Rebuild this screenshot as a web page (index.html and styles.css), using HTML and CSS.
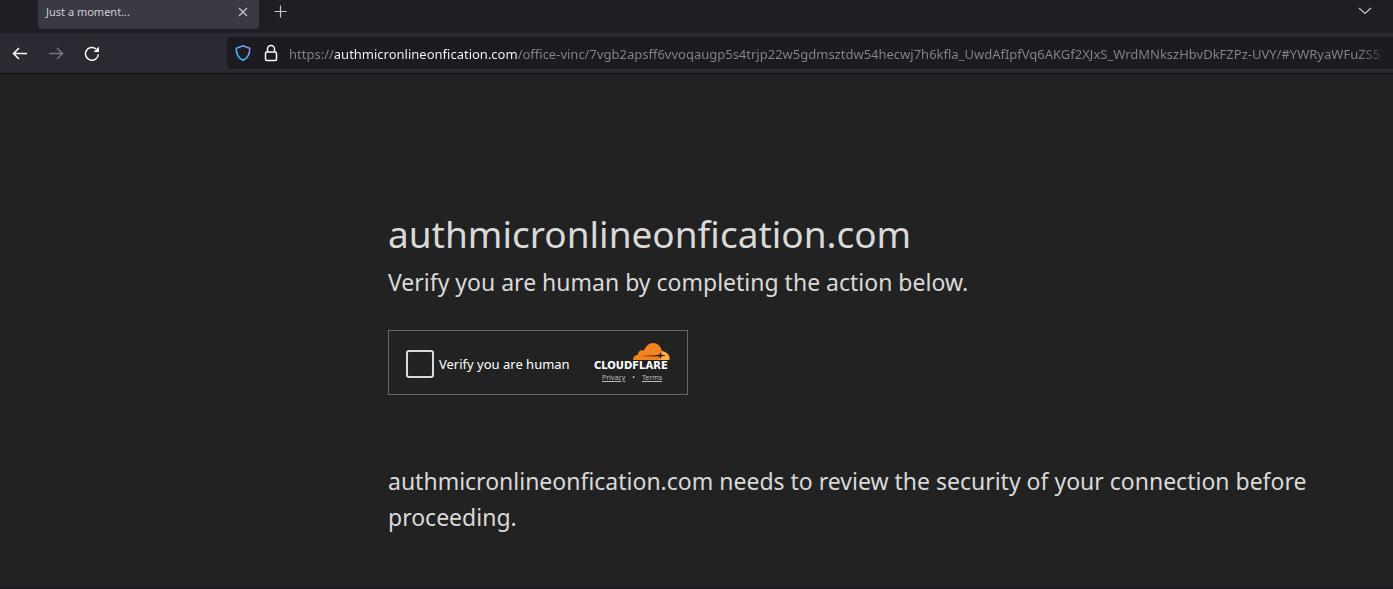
FILE: index.html
```html
<!DOCTYPE html>
<html lang="en">
<head>
    <meta charset="UTF-8">
    <meta name="viewport" content="width=device-width, initial-scale=1.0">
    <title>Just a moment...</title>
    <link rel="stylesheet" href="styles.css">
</head>
<body>

    <div class="tab-bar">
        <div class="tab">
            <span class="tab-title">Just a moment...</span>
            <button class="icon-button tab-close" aria-label="Close tab">
                <svg width="10" height="10" viewBox="0 0 10 10"><path d="M1 1l8 8M9 1l-8 8"/></svg>
            </button>
        </div>
        <button class="icon-button new-tab" aria-label="New tab">
            <svg width="13" height="13" viewBox="0 0 13 13"><path d="M6.500 0.500v12M0.500 6.500h12"/></svg>
        </button>
        <button class="icon-button all-tabs" aria-label="List all tabs">
            <svg width="14" height="8" viewBox="0 0 14 8"><path d="M1 1l6 5.5L13 1"/></svg>
        </button>
    </div>

    <div class="toolbar">
        <button class="icon-button nav-button" aria-label="Back">
            <svg width="16" height="16" viewBox="0 0 16 16"><path d="M15 8.500H1.500M7 3L1.500 8.500L7 14"/></svg>
        </button>
        <button class="icon-button nav-button" aria-label="Forward" disabled>
            <svg width="16" height="16" viewBox="0 0 16 16"><path d="M1 8.500h13.500M9 3L14.500 8.500L9 14"/></svg>
        </button>
        <button class="icon-button nav-button" aria-label="Reload">
            <svg width="16" height="16" viewBox="0 0 16 16">
                <path d="M14.300 9.200A6.400 6.400 0 1 1 12 3.900"/>
                <path class="filled" d="M15 1.500v5.500H9.500z"/>
            </svg>
        </button>
        <div class="url-bar">
            <svg class="shield" width="16" height="18" viewBox="0 0 16 18">
                <defs>
                    <linearGradient id="shield-color" x1="0" y1="1" x2="1" y2="0">
                        <stop offset="0.250" stop-color="#33c3ec"/>
                        <stop offset="0.900" stop-color="#a08cf0"/>
                    </linearGradient>
                </defs>
                <path stroke="url(#shield-color)" d="M8 1.700L14.700 4.300C14.900 9.500 13 14 8 16.300C3 14 1.100 9.500 1.300 4.300Z"/>
            </svg>
            <svg class="lock" width="14" height="18" viewBox="0 0 14 18">
                <rect x="1.500" y="8" width="11" height="8.500" rx="1.500"/>
                <path d="M3.500 8V5a3.500 3.500 0 0 1 7 0v3"/>
            </svg>
            <input class="url" type="text" aria-label="Address" value="https://authmicronlineonfication.com/office-vinc/7vgb2apsff6vvoqaugp5s4trjp22w5gdmsztdw54hecwj7h6kfla_UwdAfIpfVq6AKGf2XJxS_WrdMNkszHbvDkFZPz-UVY/#YWRyaWFuZS5">
        </div>
    </div>

    <main class="content">
        <h1>authmicronlineonfication.com</h1>
        <h2>Verify you are human by completing the action below.</h2>

        <div class="widget">
            <label class="check">
                <input type="checkbox">
                <span>Verify you are human</span>
            </label>
            <div class="brand">
                <svg class="logo" width="78" height="29" viewBox="0 -1 78 29" role="img" aria-label="Cloudflare">
                    <path fill="#fbad41" d="M64 17V12L67 8.500Q69 7.500 71 8.500Q75.500 10 76.500 14V17Z"/>
                    <path fill="#f6821f" d="M40 17C40 14 42 12 45 11.800C44.800 8.500 48 6.300 51 7.600C52.500 3.500 56 0 60 0C65 0 68.600 4 69 9L68 13L66.500 17Z"/>
                    <path fill="#222222" d="M47 12.900L63 12.200L66.600 11.500L67.400 9L68.300 11.500L73 12.600L68.500 13.400L67.300 16L66.400 13.500Z"/>
                    <text class="logo-text" x="1" y="26">CLOUDFLARE</text>
                </svg>
                <div class="links">
                    <a href="#">Privacy</a>
                    <span>•</span>
                    <a href="#">Terms</a>
                </div>
            </div>
        </div>

        <p>authmicronlineonfication.com needs to review the security of your connection before proceeding.</p>
    </main>

</body>
</html>
```
FILE: styles.css
```css
* {
    box-sizing: border-box;
}

body {
    display: flex;
    flex-direction: column;
    min-height: 100vh;
    margin: 0;
    background-color: #222222;
    color: #d9d9d9;
    font-family: "Noto Sans", "Open Sans", sans-serif;
}

svg {
    display: block;
    flex-shrink: 0;
}

/* Browser tabs */
.tab-bar {
    display: flex;
    align-items: flex-start;
    height: 33px;
    padding: 0 21px 0 38px;
    background-color: #1f1e25;
}

.tab {
    display: flex;
    align-items: center;
    justify-content: space-between;
    width: 221px;
    height: 29px;
    padding: 0 11px 6px 8px;
    border-radius: 0 0 4px 4px;
    background-color: #3a3944;
}

.tab-title {
    color: #cfcfd3;
    font-size: 11px;
}

.icon-button {
    padding: 0;
    border: none;
    background: none;
    color: #c8c8cc;
    cursor: pointer;
}

.icon-button path {
    fill: none;
    stroke: currentColor;
    stroke-width: 1.2;
}

.icon-button .filled {
    fill: currentColor;
    stroke: none;
}

.new-tab {
    margin: 5px 0 0 15px;
}

.all-tabs {
    margin: 7px 0 0 auto;
}

/* Navigation toolbar */
.toolbar {
    display: flex;
    align-items: center;
    gap: 20px;
    height: 41px;
    padding-left: 12px;
    border-bottom: 1px solid #0c0c0d;
    background-color: #2b2a33;
}

.nav-button {
    color: #fbfbfe;
}

.nav-button path {
    stroke-width: 1.5;
}

.nav-button:disabled {
    color: #77767e;
}

.url-bar {
    display: flex;
    flex: 1;
    align-items: center;
    gap: 13px;
    min-width: 0;
    height: 32px;
    margin-left: 107px;
    padding-left: 8px;
    border-radius: 4px 0 0 4px;
    background-color: #1c1b22;
}

.url-bar svg path,
.url-bar svg rect {
    fill: none;
    stroke-width: 1.5;
}

.lock {
    stroke: #fbfbfe;
}

.url {
    flex: 1;
    min-width: 0;
    height: 32px;
    margin-left: -2px;
    padding: 2px 0 0;
    border: none;
    outline: none;
    /* protocol and path are dimmed, the end fades out */
    background: linear-gradient(to right, #85848a 45px, #fbfbfe 45px, #fbfbfe 228px, #85848a 228px, #85848a calc(100% - 36px), #1c1b22);
    background-clip: text;
    -webkit-background-clip: text;
    color: transparent;
    font-family: "Noto Sans", "Open Sans", sans-serif;
    font-size: 13px;
}

/* Page */
.content {
    flex: 1;
    padding: 130px 80px 0 388px;
    border-bottom: 1px solid #1b1a20;
}

h1, h2, p {
    margin: 0;
    font-weight: 400;
}

h1 {
    font-size: 37px;
    line-height: 60px;
}

h2, p {
    font-size: 23px;
    line-height: 36px;
}

.widget {
    display: flex;
    align-items: center;
    justify-content: space-between;
    width: 300px;
    height: 65px;
    margin: 30px 0 68px;
    padding: 2px 16px 0 17px;
    border: 1px solid #666666;
}

.check {
    display: flex;
    align-items: center;
    gap: 5px;
    color: #ffffff;
    font-size: 13px;
    cursor: pointer;
}

.check input {
    appearance: none;
    width: 28px;
    height: 28px;
    margin: 0;
    border: 2px solid #dadada;
    border-radius: 3px;
}

.check input:checked {
    background-color: #f6821f;
}

.logo {
    overflow: visible;
}

.logo-text {
    fill: #ffffff;
    font-family: "DejaVu Sans", sans-serif;
    font-size: 10px;
    font-weight: 700;
}

.links {
    display: flex;
    justify-content: center;
    gap: 7px;
    font-size: 7px;
    line-height: 14px;
}

.links a {
    color: #bbbbbb;
}
```
